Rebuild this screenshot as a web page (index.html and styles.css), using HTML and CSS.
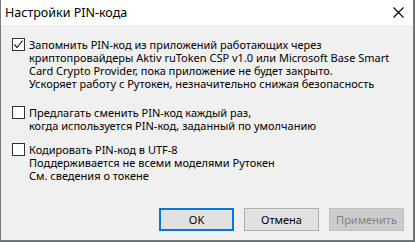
FILE: index.html
```
<!DOCTYPE html>
<html>
	<head>
		<meta charset="utf-8" />
		<title>Настройки PIN-кода</title>
		<link rel="stylesheet" href="styles.css">
	</head>
	<body>
		<div class="window">
			<div class="titlebar">
				<span class="title">Настройки PIN-кода</span>
				<svg class="close" width="11" height="11" viewBox="0 0 11 11">
					<path d="M0.5 0.5 L10.5 10.5 M10.5 0.5 L0.5 10.5" stroke="#000" stroke-width="1.1" fill="none"/>
				</svg>
			</div>

			<div class="content">
				<div class="option opt1">
					<span class="check">
						<svg width="11" height="11" viewBox="0 0 11 11">
							<path d="M1.5 5.5 L4 8.5 L9.5 1.5" stroke="#222" stroke-width="1.2" fill="none"/>
						</svg>
					</span>
					<div class="label">
						Запомнить PIN-код из приложений работающих через<br>
						криптопровайдеры Aktiv ruToken CSP v1.0 или Microsoft Base Smart<br>
						Card Crypto Provider, пока приложение не будет закрыто.<br>
						Ускоряет работу с Рутокен, незначительно снижая безопасность
					</div>
				</div>

				<div class="option opt2">
					<span class="check"></span>
					<div class="label">
						Предлагать сменить PIN-код каждый раз,<br>
						когда используется PIN-код, заданный по умолчанию
					</div>
				</div>

				<div class="option opt3">
					<span class="check"></span>
					<div class="label">
						Кодировать PIN-код в UTF-8<br>
						Поддерживается не всеми моделями Рутокен<br>
						См. сведения о токене
					</div>
				</div>

				<div class="buttons">
					<span class="btn default">OK</span>
					<span class="btn">Отмена</span>
					<span class="btn disabled">Применить</span>
				</div>
			</div>
		</div>
	</body>
</html>
```

FILE: styles.css
```
*{
	margin: 0;
	padding: 0;
	box-sizing: border-box;
}
body{
	width: 415px;
	height: 242px;
	background: #5f6a70;
	font-family: "Noto Sans", "Open Sans", sans-serif;
	font-size: 11px;
	color: #000;
	overflow: hidden;
}
.window{
	width: 414px;
	height: 241px;
	background: #f0f0f0;
	border: 1px solid #7a7a7a;
	border-top: none;
	display: flex;
	flex-direction: column;
}
.titlebar{
	height: 25px;
	background: #fff;
	display: flex;
	align-items: center;
	justify-content: space-between;
	padding: 0 9px 0 4px;
}
.title{
	font-size: 12.5px;
	line-height: 14px;
}
.content{
	flex: 1;
	display: flex;
	flex-direction: column;
	padding: 13px 9px 9px 11px;
}
.option{
	display: flex;
	align-items: flex-start;
	gap: 4px;
}
.opt2{
	margin-top: 16px;
}
.opt3{
	margin-top: 11px;
}
.check{
	width: 13px;
	height: 13px;
	flex: none;
	background: #fff;
	border: 1px solid #333;
	display: flex;
	align-items: center;
	justify-content: center;
}
.label{
	line-height: 13px;
	white-space: nowrap;
}
.buttons{
	margin-top: auto;
	display: flex;
	justify-content: flex-end;
	gap: 10px;
}
.btn{
	width: 75px;
	height: 23px;
	display: flex;
	align-items: center;
	justify-content: center;
	background: #e1e1e1;
	border: 1px solid #adadad;
}
.btn.default{
	border: 2px solid #0078d7;
}
.btn.disabled{
	background: #cccccc;
	border-color: #bfbfbf;
	color: #838383;
}
```
